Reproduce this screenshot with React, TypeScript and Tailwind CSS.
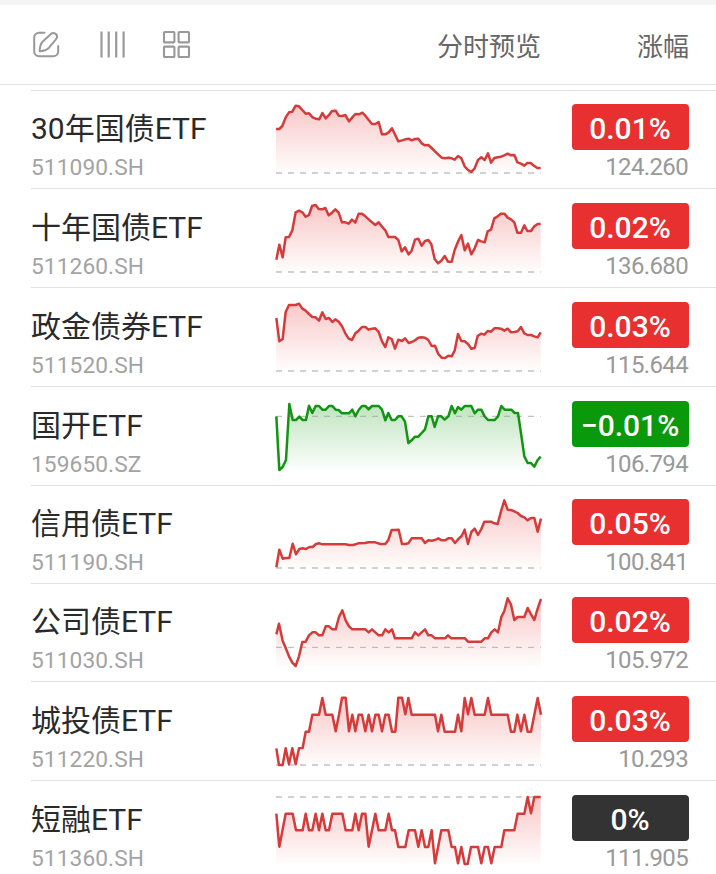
import { FunctionComponent } from "react";

interface Fund {
  name: string;
  code: string;
  change: string;
  price: string;
  // row height + top padding, rows alternate between 98 and 99px
  size: string;
  // offset of the chart from the row's top line
  shift: number;
  base: number;
  bottom: number;
  points: string;
}

const funds: Fund[] = [
  {
    name: "30年国债ETF", code: "511090.SH", change: "0.01%", price: "124.260",
    size: "h-[98px] pt-[13px]", shift: 0, base: 249, bottom: 249,
    points: "33,117 43,117 52,108 62,82 72,67 82,65 92,47 102,49 112,60 122,71 132,70 143,82 152,86 163,88 172,69 182,85 192,75 201,63 212,62 221,77 231,78 241,75 252,94 262,82 271,72 282,73 292,68 301,77 311,90 321,102 331,102 341,96 351,133 361,133 371,127 381,115 391,136 400,154 411,151 421,148 431,146 440,151 450,147 460,146 470,160 480,166 490,165 500,174 510,184 520,194 530,203 540,205 550,203 560,205 569,209 579,198 589,205 599,229 609,240 619,246 629,235 639,210 649,202 659,210 669,190 678,218 688,204 698,202 708,200 718,196 728,191 738,196 748,195 757,217 768,221 778,227 787,219 797,219 807,227 817,234 827,234",
  },
  {
    name: "十年国债ETF", code: "511260.SH", change: "0.02%", price: "136.680",
    size: "h-[99px] pt-[14px]", shift: 2, base: 246, bottom: 246,
    points: "34,209 43,164 53,202 62,142 72,141 82,121 92,67 102,62 112,67 122,80 132,75 141,48 152,45 161,57 171,58 181,54 191,76 201,68 211,58 221,68 231,97 241,97 251,101 261,89 271,98 281,71 291,71 301,79 311,88 321,97 331,105 341,97 351,110 361,121 370,141 380,141 390,141 400,150 410,184 420,172 431,193 440,182 450,149 460,146 470,167 480,153 490,150 499,163 509,207 519,220 529,212 539,198 549,215 560,215 569,180 579,155 589,135 599,181 609,161 619,193 629,175 639,150 649,154 659,157 668,124 678,119 688,85 698,79 708,71 718,71 728,83 738,88 748,97 757,128 768,128 778,106 787,123 798,123 808,109 818,102 827,102",
  },
  {
    name: "政金债券ETF", code: "511520.SH", change: "0.03%", price: "115.644",
    size: "h-[99px] pt-[14px]", shift: 1, base: 249, bottom: 249,
    points: "34,90 43,160 53,153 62,72 72,51 82,51 92,51 102,47 112,62 122,68 132,78 142,87 152,88 162,98 172,73 182,93 192,90 202,102 211,94 221,101 231,115 241,136 251,152 261,156 271,136 281,128 291,117 301,117 311,125 321,122 331,121 341,132 351,160 361,177 370,148 380,153 390,182 400,155 411,159 420,151 431,165 440,162 450,157 460,149 470,148 480,149 490,156 500,174 510,173 520,198 530,209 540,210 550,203 560,205 569,188 579,138 589,159 599,160 609,168 619,182 629,180 638,144 648,137 658,140 668,129 678,131 688,121 698,121 708,122 718,128 728,122 738,133 748,132 758,130 768,117 778,136 788,141 798,141 808,145 818,148 827,133",
  },
  {
    name: "国开ETF", code: "159650.SZ", change: "−0.01%", price: "106.794",
    size: "h-[99px] pt-[14px]", shift: 2, base: 85, bottom: 246,
    points: "34,85 43,246 53,237 63,216 73,48 83,96 93,96 103,86 113,96 123,96 132,53 142,75 152,54 162,54 172,65 182,65 192,54 202,54 212,65 221,66 231,76 241,76 252,76 262,65 271,85 281,66 291,54 301,54 311,64 321,54 331,54 341,54 351,65 361,97 370,75 380,96 390,96 400,85 410,85 420,101 430,165 440,157 450,146 460,146 470,135 480,124 490,85 500,85 509,117 519,85 529,85 539,95 550,85 560,54 570,76 579,57 589,65 599,54 609,54 619,54 629,76 639,65 649,65 659,85 669,96 679,96 689,96 699,85 709,54 719,65 729,65 739,65 749,75 759,75 769,143 778,205 788,225 798,225 808,236 818,216 827,206",
  },
  {
    name: "信用债ETF", code: "511190.SH", change: "0.05%", price: "100.841",
    size: "h-[98px] pt-[13px]", shift: 1, base: 246, bottom: 246,
    points: "34,244 43,191 53,218 63,216 73,216 83,173 93,205 103,189 113,187 123,189 133,183 143,183 153,174 163,172 173,175 183,175 203,175 222,175 241,175 252,177 264,177 280,172 300,171 311,169 331,169 346,174 361,174 370,162 380,132 390,132 401,131 411,174 421,174 430,172 440,157 450,157 470,157 480,171 490,163 500,164 510,162 520,157 530,163 540,163 550,157 560,157 570,171 580,159 590,150 599,131 609,174 619,138 629,128 639,147 649,129 658,107 668,107 678,107 688,112 698,114 708,76 718,43 728,71 738,72 748,76 758,81 768,90 778,94 788,103 798,96 808,96 818,137 828,98",
  },
  {
    name: "公司债ETF", code: "511030.SH", change: "0.02%", price: "105.972",
    size: "h-[98px] pt-[13px]", shift: 1, base: 190, bottom: 246,
    points: "34,151 42,119 53,170 62,192 72,217 82,236 92,246 102,217 112,174 122,173 132,154 142,145 152,145 162,154 172,154 182,127 192,127 202,136 212,136 222,99 232,79 242,109 252,127 262,136 272,136 301,136 311,145 321,136 331,145 341,154 351,154 361,136 371,145 381,136 390,163 400,163 440,163 450,145 460,154 470,145 480,136 490,154 500,154 510,163 540,163 549,154 559,163 600,163 609,173 649,173 659,163 669,163 679,145 689,136 699,145 709,99 718,81 728,43 738,62 748,108 758,99 778,99 788,72 798,91 808,108 818,74 828,45",
  },
  {
    name: "城投债ETF", code: "511220.SH", change: "0.03%", price: "10.293",
    size: "h-[99px] pt-[14px]", shift: 2, base: 246, bottom: 246,
    points: "34,196 42,246 53,246 62,196 72,244 82,196 92,244 102,196 113,195 122,146 132,146 142,95 162,95 172,45 182,95 202,95 212,145 222,95 231,44 242,44 252,145 262,95 271,145 281,95 291,95 301,145 311,95 321,145 331,95 341,95 351,145 361,95 371,95 381,146 391,146 400,44 411,44 421,94 430,45 440,95 510,95 519,145 529,95 539,146 570,146 579,95 589,145 599,45 609,94 619,45 629,95 659,95 669,45 679,95 728,95 738,146 748,146 757,95 768,145 778,95 788,146 798,146 808,95 818,45 828,95",
  },
  {
    name: "短融ETF", code: "511360.SH", change: "0%", price: "111.905",
    size: "h-[94px] pt-[14px]", shift: 2, base: 45, bottom: 246,
    points: "34,95 43,194 62,95 83,95 93,145 113,145 122,95 132,145 142,145 152,95 162,145 172,95 182,145 192,145 202,95 232,95 242,145 262,145 271,95 281,145 291,95 301,95 311,194 331,95 341,145 361,145 371,95 381,145 390,145 400,195 421,195 431,145 450,145 460,194 470,145 480,195 490,195 500,145 510,244 529,145 550,145 560,195 570,195 579,244 589,195 599,246 608,246 618,195 639,195 649,244 659,195 669,195 679,244 689,195 709,195 718,145 748,145 758,95 778,95 788,45 798,94 808,45 827,45",
  },
];

function badgeColor(change: string) {
  if (change === "0%") return "bg-[#333333]";
  return change.startsWith("−") ? "bg-[#0a990a]" : "bg-[#e83030]";
}

const Sparkline: FunctionComponent<{ fund: Fund }> = ({ fund }) => {
  const down = fund.change.startsWith("−");
  const y = fund.shift * 3 - 3;

  return (
    <svg width="265" height="97" viewBox="33 0 795 291" className="block overflow-visible" fill="none">
      <g transform={`translate(0 ${y})`}>
        <polygon points={`33,${fund.bottom} ${fund.points} 827,${fund.bottom}`} fill={down ? "url(#fall)" : "url(#rise)"} />
        <line x1="33" x2="827" y1={fund.base} y2={fund.base} stroke="#999" strokeOpacity="0.6" strokeWidth="4" strokeDasharray="18 18" />
        <polyline points={fund.points} stroke={down ? "#149414" : "#d43b3b"} strokeWidth="7.5" strokeLinejoin="round" />
      </g>
    </svg>
  );
};

const Row: FunctionComponent<{ fund: Fund }> = ({ fund }) => {
  return (
    <div className={`ml-[31px] flex border-t border-[#e2e2e2] ${fund.size}`}>
      <div className="w-[245px] shrink-0">
        <div className="h-[46px] pt-[3px] text-[30px] leading-[44px] text-[#2a2a2a] whitespace-nowrap">{fund.name}</div>
        <div className="pt-px text-[22.7px] leading-[33px] tracking-[0.1px] text-[#a3a3a3]">{fund.code}</div>
      </div>
      <div className={`shrink-0 ${fund.size.includes("pt-[13px]") ? "-mt-[13px]" : "-mt-[14px]"}`}>
        <Sparkline fund={fund} />
      </div>
      <div className="ml-[31px] w-[117px] shrink-0">
        <div className={`flex h-[46px] items-center justify-center rounded-[4px] pt-[4px] pr-px text-[30px] leading-none font-medium text-white ${badgeColor(fund.change)}`}>
          {fund.change}
        </div>
        <div className="pr-px pt-px text-right text-[24px] leading-[33px] tracking-[-0.65px] text-[#999]">{fund.price}</div>
      </div>
    </div>
  );
};

export default function App() {
  return (
    <div className="h-[874px] w-[716px] overflow-hidden bg-white font-['Roboto','Noto_Sans_CJK_SC',sans-serif]">
      <svg width="0" height="0" className="absolute">
        <defs>
          <linearGradient id="rise" gradientUnits="userSpaceOnUse" x1="0" y1="45" x2="0" y2="246">
            <stop offset="0" stopColor="#e83030" stopOpacity="0.27" />
            <stop offset="1" stopColor="#e83030" stopOpacity="0.01" />
          </linearGradient>
          <linearGradient id="fall" gradientUnits="userSpaceOnUse" x1="0" y1="45" x2="0" y2="246">
            <stop offset="0" stopColor="#0a990a" stopOpacity="0.27" />
            <stop offset="1" stopColor="#0a990a" stopOpacity="0.01" />
          </linearGradient>
        </defs>
      </svg>
      <div className="h-[5px] bg-[#f4f4f4]" />
      <header className="flex h-[80px] items-center border-b border-[#e2e2e2] pr-[27px] pl-[32px] text-[26px] text-[#666]">
        <div className="flex items-center text-[#999]">
          {/* edit */}
          <svg width="29" height="29" viewBox="0 0 29 29" fill="none" stroke="currentColor" strokeWidth="2" strokeLinecap="round" strokeLinejoin="round">
            <path d="M12.5 2.7H7A4.8 4.8 0 0 0 2.2 7.5v14A4.8 4.8 0 0 0 7 26.3h14.2a5 5 0 0 0 5-5V16" />
            <path d="M18.6 4.3c2.8-2.6 7.600-.4 6.200 3.600-.3.800-.8 1.400-1.300 2L17 17.700c-1.900 2-5.200 3.200-9.300 3.600 0-3.900.9-7.400 3.100-9.800z" />
          </svg>
          {/* columns */}
          <svg width="27" height="29" viewBox="0 0 27 29" className="ml-[38px]" fill="none" stroke="currentColor" strokeWidth="2.2">
            <path d="M2.5 1.500v26M9.700 1.500v26M17.200 1.500v26M24.600 1.500v26" />
          </svg>
          {/* grid */}
          <svg width="29" height="29" viewBox="0 0 29 29" className="ml-[36px]" fill="none" stroke="currentColor" strokeWidth="2.1">
            <rect x="2" y="2" width="10.400" height="10.400" rx="0.800" />
            <rect x="16.600" y="2" width="10.400" height="10.400" rx="0.800" />
            <rect x="2" y="16.600" width="10.400" height="10.400" rx="0.800" />
            <rect x="16.600" y="16.600" width="10.400" height="10.400" rx="0.800" />
          </svg>
        </div>
        <div className="ml-auto pt-[5px]">分时预览</div>
        <div className="ml-[96px] pt-[5px]">涨幅</div>
      </header>
      <main className="pt-[5px]">
        {funds.map((f) => <Row key={f.code} fund={f} />)}
      </main>
    </div>
  );
}
